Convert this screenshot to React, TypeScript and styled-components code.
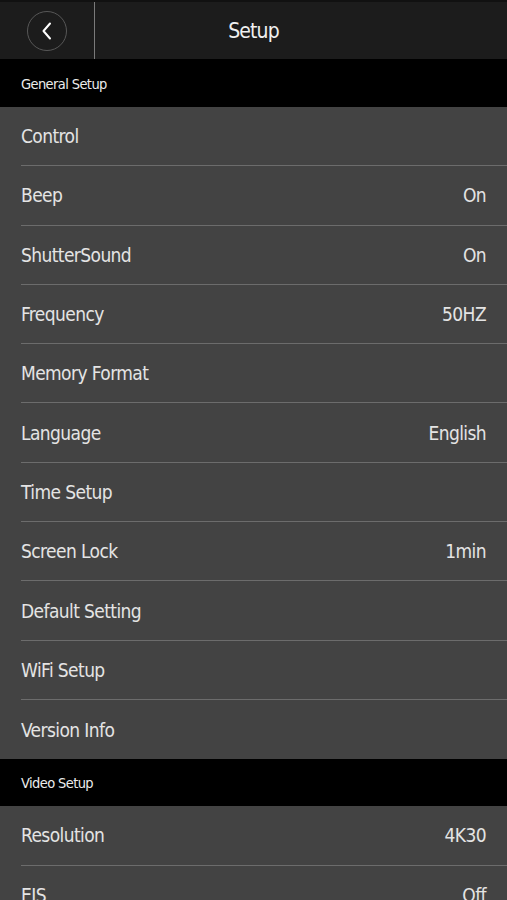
import styled, { createGlobalStyle } from "styled-components";

const GlobalStyle = createGlobalStyle`
  html, body {
    margin: 0;
    padding: 0;
    background: #000;
  }
  body {
    font-family: "DejaVu Sans Condensed", "Liberation Sans Narrow", sans-serif;
  }
`;

const Page = styled.div`
  width: 507px;
  height: 900px;
  overflow: hidden;
  background: #434343;
  display: flex;
  flex-direction: column;
`;

const Header = styled.header`
  height: 60px;
  box-sizing: border-box;
  flex-shrink: 0;
  background: #1c1c1c;
  display: grid;
  grid-template-columns: 95px 1fr 95px;
  border-top: 2px solid #111;
  border-bottom: 1px solid #000;
`;

const BackCell = styled.div`
  display: flex;
  align-items: center;
  justify-content: center;
  border-right: 1.5px solid #7a7a7a;
`;

const BackButton = styled.button`
  width: 40px;
  height: 40px;
  border-radius: 50%;
  border: 1.5px solid #575757;
  background: transparent;
  display: flex;
  align-items: center;
  justify-content: center;
  padding: 0;
  cursor: pointer;
`;

const Title = styled.h1`
  margin: 0;
  display: flex;
  align-items: center;
  justify-content: center;
  font-size: 21px;
  letter-spacing: -0.9px;
  font-weight: normal;
  color: #f0f0f0;
`;

const SectionHeader = styled.div`
  height: 47px;
  flex-shrink: 0;
  background: #000;
  display: flex;
  align-items: center;
  padding-left: 21px;
  font-size: 14.5px;
  letter-spacing: -0.6px;
  color: #ececec;
`;

const Row = styled.div<{ last?: boolean }>`
  height: 59.3px;
  flex-shrink: 0;
  margin-left: 21px;
  padding-right: 21px;
  box-sizing: border-box;
  display: flex;
  align-items: center;
  justify-content: space-between;
  border-bottom: ${({ last }) => (last ? "none" : "1.5px solid #6c6c6c")};
  font-size: 19px;
  letter-spacing: -0.6px;
  color: #e4e4e4;
`;

const Value = styled.span`
  color: #e4e4e4;
`;

const general: [string, string][] = [
  ["Control", ""],
  ["Beep", "On"],
  ["ShutterSound", "On"],
  ["Frequency", "50HZ"],
  ["Memory Format", ""],
  ["Language", "English"],
  ["Time Setup", ""],
  ["Screen Lock", "1min"],
  ["Default Setting", ""],
  ["WiFi Setup", ""],
  ["Version Info", ""],
];

const video: [string, string][] = [
  ["Resolution", "4K30"],
  ["EIS", "Off"],
];

const App = () => (
  <Page>
    <GlobalStyle />
    <Header>
      <BackCell>
        <BackButton aria-label="Back">
          <svg width="14" height="20" viewBox="0 0 14 20">
            <path
              d="M10 2.5 L3.5 10 L10 17.5"
              fill="none"
              stroke="#fff"
              strokeWidth="2"
              strokeLinecap="round"
              strokeLinejoin="round"
            />
          </svg>
        </BackButton>
      </BackCell>
      <Title>Setup</Title>
    </Header>
    <SectionHeader>General Setup</SectionHeader>
    {general.map(([label, value], i) => (
      <Row key={label} last={i === general.length - 1}>
        <span>{label}</span>
        <Value>{value}</Value>
      </Row>
    ))}
    <SectionHeader>Video Setup</SectionHeader>
    {video.map(([label, value]) => (
      <Row key={label}>
        <span>{label}</span>
        <Value>{value}</Value>
      </Row>
    ))}
  </Page>
);

export default App;
